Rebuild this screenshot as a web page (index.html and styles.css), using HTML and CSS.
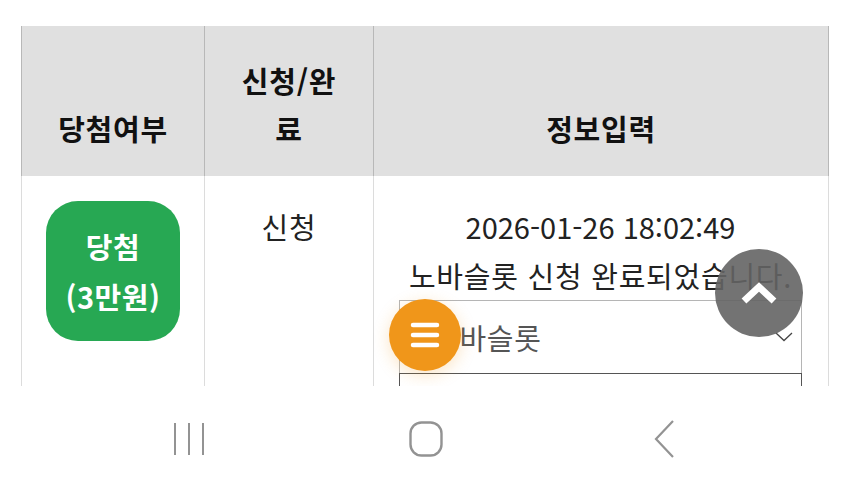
FILE: index.html
```html
<!DOCTYPE html>
<html lang="ko">
<head>
    <meta charset="UTF-8">
    <meta name="viewport" content="width=device-width, initial-scale=1.0">
    <title>당첨 정보입력</title>
    <link rel="stylesheet" href="styles.css">
</head>
<body>
    <div class="page">
        <table class="result-table">
            <colgroup>
                <col class="col-win">
                <col class="col-status">
                <col class="col-info">
            </colgroup>
            <thead>
                <tr>
                    <th>당첨여부</th>
                    <th>신청/완<br>료</th>
                    <th>정보입력</th>
                </tr>
            </thead>
            <tbody>
                <tr>
                    <td><span class="badge">당첨<br>(3만원)</span></td>
                    <td class="ko">신청</td>
                    <td class="info">
                        <p class="line">2026-01-26 18:02:49</p>
                        <p class="line ko">노바슬롯 신청 완료되었습니다.</p>
                        <div class="select">
                            <span class="ko">노바슬롯</span>
                            <svg class="chevron" width="18" height="10" viewBox="0 0 18 10"><path d="M1 1 L9 8.5 L17 1" fill="none" stroke="#444" stroke-width="1.3"/></svg>
                        </div>
                        <div class="field"></div>
                    </td>
                </tr>
            </tbody>
        </table>
    </div>

    <button class="fab-menu" aria-label="메뉴">
        <svg width="30" height="26" viewBox="0 0 30 26"><path d="M3 3 H27 M3 13 H27 M3 23 H27" stroke="#fff" stroke-width="4.5" stroke-linecap="round"/></svg>
    </button>
    <button class="fab-top" aria-label="맨 위로">
        <svg width="40" height="24" viewBox="0 0 40 24"><path d="M5 20 L20 6 L35 20" fill="none" stroke="#fff" stroke-width="7"/></svg>
    </button>

    <nav class="navbar">
        <svg class="nav-icon nav-recent" width="32" height="36" viewBox="0 0 32 36"><path d="M2 2 V34 M16 2 V34 M30 2 V34" stroke="#939393" stroke-width="2"/></svg>
        <svg class="nav-icon nav-home" width="36" height="38" viewBox="0 0 36 38"><rect x="2.5" y="2.5" width="31" height="33" rx="11" fill="none" stroke="#939393" stroke-width="2.4"/></svg>
        <svg class="nav-icon" width="24" height="40" viewBox="0 0 24 40"><path d="M20 2 L3 20 L20 38" fill="none" stroke="#939393" stroke-width="2.2"/></svg>
    </nav>
</body>
</html>
```

FILE: styles.css
```css
body {
    margin: 0;
    height: 100vh;
    overflow: hidden;
    background-color: #fff;
    font-family: "Noto Sans CJK KR", "Noto Sans", sans-serif;
    color: #222;
}
.page {
    padding: 26px 21px 0 21px;
}
.result-table {
    width: 808px;
    border-collapse: collapse;
    table-layout: fixed;
    font-size: 29px;
}
.col-win {
    width: 183px;
}
.col-status {
    width: 169px;
}
.ko {
    letter-spacing: 0.75px;
}
.result-table th {
    background-color: #e0e0e0;
    height: 150px;
    padding: 0 0 24px 0;
    box-sizing: border-box;
    vertical-align: bottom;
    font-weight: bold;
    color: #111;
    line-height: 48px;
    letter-spacing: 0.75px;
    border-left: 1px solid #b8b8b8;
    border-right: 1px solid #b8b8b8;
}
.result-table td {
    vertical-align: top;
    text-align: center;
    line-height: 49px;
    padding: 26px 0 0 0;
    border-left: 1px solid #dcdcdc;
    border-right: 1px solid #dcdcdc;
}
.badge {
    display: inline-block;
    box-sizing: border-box;
    width: 134px;
    height: 140px;
    padding: 20px 0;
    margin-top: -1px;
    border-radius: 32px;
    background-color: #27a853;
    color: #fff;
    font-weight: bold;
    line-height: 50px;
    letter-spacing: 0.5px;
}
.info {
    padding: 26px 26px 0 25px !important;
}
.line {
    margin: 0;
    white-space: nowrap;
}
.select {
    display: flex;
    align-items: center;
    justify-content: space-between;
    height: 73px;
    box-sizing: border-box;
    padding: 0 8px 0 32px;
    border: 1px solid #b5b5b5;
    border-bottom: none;
    color: #555;
}
.field {
    height: 40px;
    border: 1px solid #555;
    border-bottom: none;
}
.fab-menu {
    position: fixed;
    left: 389px;
    top: 299px;
    width: 72px;
    height: 72px;
    border: none;
    border-radius: 50%;
    background-color: #f0961a;
    box-shadow: 0 4px 16px rgba(240, 150, 26, 0.25);
    display: flex;
    align-items: center;
    justify-content: center;
    padding: 0;
}
.fab-top {
    position: fixed;
    left: 715px;
    top: 249px;
    width: 88px;
    height: 88px;
    border: none;
    border-radius: 50%;
    background-color: rgba(100, 100, 100, 0.9);
    display: flex;
    align-items: center;
    justify-content: center;
    padding: 0;
}
.navbar {
    position: fixed;
    left: 0;
    bottom: 0;
    width: 100%;
    height: 101px;
    background-color: #fff;
    display: flex;
    align-items: center;
    padding-left: 173px;
    box-sizing: border-box;
}
.nav-icon {
    display: block;
    margin-top: 5px;
}
.nav-recent {
    margin-right: 203px;
}
.nav-home {
    margin-right: 209px;
}
```
